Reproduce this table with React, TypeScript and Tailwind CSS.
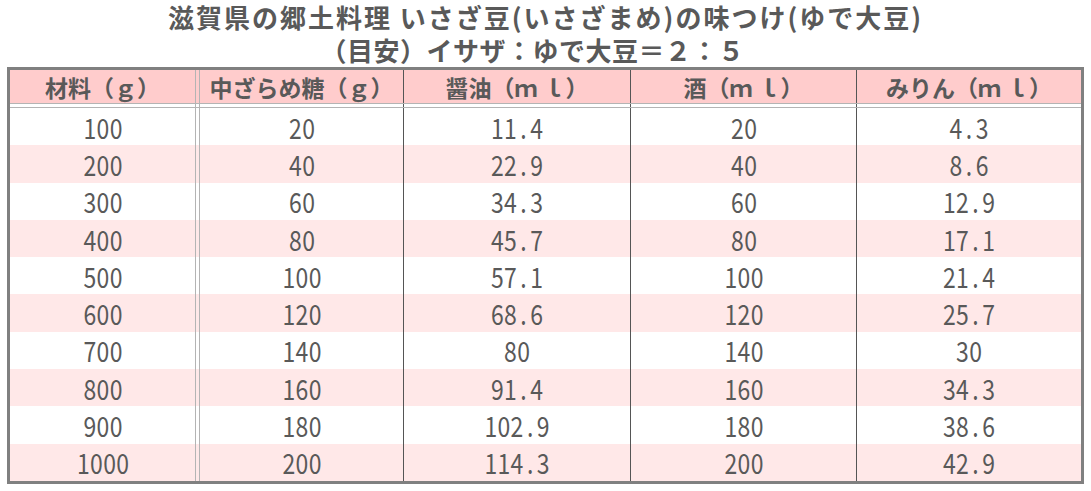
import React from 'react';

const rows = [
  ['100', '20', '11.4', '20', '4.3'],
  ['200', '40', '22.9', '40', '8.6'],
  ['300', '60', '34.3', '60', '12.9'],
  ['400', '80', '45.7', '80', '17.1'],
  ['500', '100', '57.1', '100', '21.4'],
  ['600', '120', '68.6', '120', '25.7'],
  ['700', '140', '80', '140', '30'],
  ['800', '160', '91.4', '160', '34.3'],
  ['900', '180', '102.9', '180', '38.6'],
  ['1000', '200', '114.3', '200', '42.9'],
];

const headers = ['材料（ｇ）', '中ざらめ糖（ｇ）', '醤油（ｍ ｌ）', '酒（ｍ ｌ）', 'みりん（ｍ ｌ）'];

// digits are drawn in fixed cells, like a half-width gothic face
const Num = ({ v }: { v: string }) => (
  <span className="inline-block scale-x-[0.82] whitespace-nowrap">
    {v.split('').map((c, i) => (
      <span key={i} className="inline-block w-[16px] text-center">
        {c}
      </span>
    ))}
  </span>
);

const Row = ({ className, cells }: { className: string; cells: React.ReactNode[] }) => (
  <div className={`flex ${className}`}>
    <div className="w-[186px] border-r border-[#b4b4b4] flex items-center justify-center">{cells[0]}</div>
    <div className="w-[3px]" />
    <div className="w-[205px] border-l border-r border-l-[#b4b4b4] border-r-[#555555] flex items-center justify-center">
      {cells[1]}
    </div>
    <div className="w-[227px] border-r border-[#555555] flex items-center justify-center">{cells[2]}</div>
    <div className="w-[226px] border-r border-[#555555] flex items-center justify-center">{cells[3]}</div>
    <div className="flex-1 flex items-center justify-center">{cells[4]}</div>
  </div>
);

const App = () => {
  return (
    <div className="w-[1091px] h-[491px] bg-white text-[#595959] font-['Noto_Sans_CJK_JP','Noto_Sans',sans-serif] overflow-hidden">
      <div className="h-[67px] flex flex-col items-center font-bold text-[26px]">
        <div className="h-[33px] leading-[33px] tracking-[2px]">滋賀県の郷土料理 いさざ豆(いさざまめ)の味つけ(ゆで大豆)</div>
        <div className="h-[34px] leading-[34px] pr-[26px] tracking-[0.5px]">（目安）イサザ：ゆで大豆＝２：５</div>
      </div>

      <div className="mx-[7px] border-[3px] border-[#808080]">
        <Row
          className="h-[34px] bg-[#ffcccc] border-b border-[#b4b4b4] font-bold text-[23px] leading-[30px]"
          cells={headers.map((h) => <span className="whitespace-pre">{h}</span>)}
        />
        <Row className="h-[4px] bg-white border-b border-[#b4b4b4]" cells={['', '', '', '', '']} />
        {rows.map((r, i) => (
          <Row
            key={i}
            className={`h-[37.3px] text-[28px] leading-[34px] ${i % 2 === 1 ? 'bg-[#ffe8e8]' : 'bg-white'}`}
            cells={r.map((v) => <Num v={v} />)}
          />
        ))}
      </div>
    </div>
  );
};

export default App;
